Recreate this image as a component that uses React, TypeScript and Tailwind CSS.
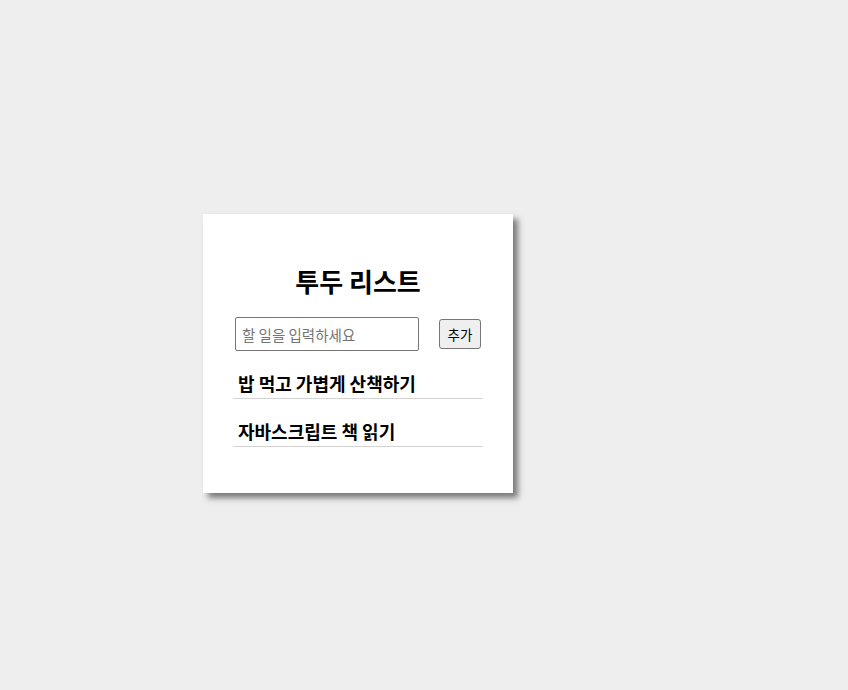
export default function App() {
  const todos = ['밥 먹고 가볍게 산책하기', '자바스크립트 책 읽기'];

  return (
    <div
      className="min-h-[690px] w-full bg-[#eeeeee] pt-[214px] pl-[203px]"
      style={{ fontFamily: '"Noto Sans CJK KR", "Noto Sans", sans-serif' }}
    >
      <div className="w-[310px] bg-white px-[30px] pt-[51px] pb-[46px] shadow-[5px_5px_6px_#7a7a7a]">
        {/* Title */}
        <h1 className="text-center text-[26px] font-bold leading-8 text-black">투두 리스트</h1>

        {/* Input row */}
        <div className="mt-[20px] flex items-center">
          <input
            type="text"
            placeholder="할 일을 입력하세요"
            className="ml-[2px] h-[34px] w-[184px] rounded-[2px] border border-[#767676] bg-white px-[6px] text-[14.5px] text-black placeholder:text-[#757575] outline-none"
          />
          <button className="ml-[20px] h-[30px] w-[42px] rounded-[3px] border border-[#767676] bg-[#efefef] text-[13.5px] text-black">
            추가
          </button>
        </div>

        {/* List */}
        <ul>
          {todos.map((t) => (
            <li
              key={t}
              className="border-b border-[#d3d3d3] pl-[5px] pt-[20px] pb-[3px] text-[18px] font-bold leading-6 text-black"
            >
              {t}
            </li>
          ))}
        </ul>
      </div>
    </div>
  );
}
